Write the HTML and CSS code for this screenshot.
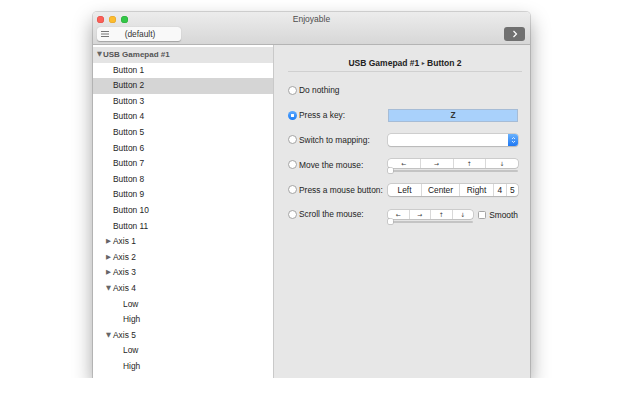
FILE: index.html
```html
<!DOCTYPE html>
<html lang="en">
<head>
  <meta charset="UTF-8">
  <title>Enjoyable</title>
  <link rel="stylesheet" href="styles.css">
</head>
<body>
  <div class="stage">
    <div class="window">

      <!-- Title bar + toolbar -->
      <div class="titlebar">
        <div class="title-row">
          <div class="lights">
            <span class="light red"></span>
            <span class="light yellow"></span>
            <span class="light green"></span>
          </div>
          <div class="title">Enjoyable</div>
        </div>
        <div class="toolbar">
          <div class="mapping-btn">
            <svg class="menu-icon" width="8" height="6" viewBox="0 0 8 6">
              <path d="M0 0.5H8M0 3H8M0 5.5H8" stroke="#666" stroke-width="0.9"/>
            </svg>
            <span class="mapping-name">(default)</span>
          </div>
          <div class="next-btn">
            <svg width="6" height="8" viewBox="0 0 6 8">
              <path d="M1.5 1L4.5 4L1.5 7" fill="none" stroke="#fff" stroke-width="1.2"/>
            </svg>
          </div>
        </div>
      </div>

      <div class="content">
        <!-- Device tree -->
        <div class="sidebar">
          <div class="row group"><span class="tri">▼</span>USB Gamepad #1</div>
          <div class="row lvl1">Button 1</div>
          <div class="row lvl1 selected">Button 2</div>
          <div class="row lvl1">Button 3</div>
          <div class="row lvl1">Button 4</div>
          <div class="row lvl1">Button 5</div>
          <div class="row lvl1">Button 6</div>
          <div class="row lvl1">Button 7</div>
          <div class="row lvl1">Button 8</div>
          <div class="row lvl1">Button 9</div>
          <div class="row lvl1">Button 10</div>
          <div class="row lvl1">Button 11</div>
          <div class="row axis"><span class="tri">▶</span>Axis 1</div>
          <div class="row axis"><span class="tri">▶</span>Axis 2</div>
          <div class="row axis"><span class="tri">▶</span>Axis 3</div>
          <div class="row axis"><span class="tri">▼</span>Axis 4</div>
          <div class="row lvl2">Low</div>
          <div class="row lvl2">High</div>
          <div class="row axis"><span class="tri">▼</span>Axis 5</div>
          <div class="row lvl2">Low</div>
          <div class="row lvl2">High</div>
        </div>

        <!-- Action panel -->
        <div class="panel">
          <div class="heading">USB Gamepad #1 <span class="crumb">▸</span> Button 2</div>

          <div class="options">
            <div class="option">
              <label class="choice"><span class="radio"></span>Do nothing</label>
            </div>

            <div class="option">
              <label class="choice"><span class="radio on"></span>Press a key:</label>
              <div class="keyfield">Z</div>
            </div>

            <div class="option">
              <label class="choice"><span class="radio"></span>Switch to mapping:</label>
              <div class="popup">
                <span class="stepper">
                  <svg width="5" height="8" viewBox="0 0 5 8">
                    <path d="M1 3L2.5 1.5L4 3M1 5L2.5 6.5L4 5" fill="none" stroke="#fff" stroke-width="0.8"/>
                  </svg>
                </span>
              </div>
            </div>

            <div class="option">
              <label class="choice"><span class="radio"></span>Move the mouse:</label>
              <div class="group-ctl">
                <div class="segmented small">
                  <span>←</span><span>→</span><span>↑</span><span>↓</span>
                </div>
                <div class="slider"><span class="knob"></span></div>
              </div>
            </div>

            <div class="option">
              <label class="choice"><span class="radio"></span>Press a mouse button:</label>
              <div class="segmented buttons">
                <span class="w-left">Left</span><span class="w-center">Center</span><span class="w-right">Right</span><span class="w-num">4</span><span class="w-num">5</span>
              </div>
            </div>

            <div class="option">
              <label class="choice"><span class="radio"></span>Scroll the mouse:</label>
              <div class="scroll-ctl">
                <div class="group-ctl narrow">
                  <div class="segmented small">
                    <span>←</span><span>→</span><span>↑</span><span>↓</span>
                  </div>
                  <div class="slider"><span class="knob"></span></div>
                </div>
                <label class="check"><span class="box"></span>Smooth</label>
              </div>
            </div>
          </div>
        </div>
      </div>

    </div>
  </div>
</body>
</html>
```

FILE: styles.css
```css
body {
  margin: 0;
  background: #fff;
  font-family: "Liberation Sans", Arial, sans-serif;
  font-size: 8.4px;
  color: #1e1e1e;
}

.stage {
  padding: 12px 0 0 93px;
}

.window {
  width: 437px;
  height: 366px;
  border-radius: 4px 4px 0 0;
  overflow: hidden;
  display: flex;
  flex-direction: column;
  box-shadow: 0 9px 20px rgba(0,0,0,0.38), 0 0 0 1px rgba(0,0,0,0.14);
}

/* title bar */
.titlebar {
  height: 32px;
  background: linear-gradient(#ececec, #d7d7d7);
  border-bottom: 1px solid #b4b4b4;
  flex-shrink: 0;
}

.title-row {
  position: relative;
  height: 15px;
}

.lights {
  display: flex;
  gap: 5px;
  padding: 4px 0 0 4px;
}

.light {
  width: 7px;
  height: 7px;
  border-radius: 50%;
}
.light.red { background: #fc5f57; box-shadow: inset 0 0 0 0.5px #de4a43; }
.light.yellow { background: #fdbc2e; box-shadow: inset 0 0 0 0.5px #de9f26; }
.light.green { background: #33c748; box-shadow: inset 0 0 0 0.5px #27aa35; }

.title {
  position: absolute;
  left: 0;
  right: 0;
  top: 2px;
  text-align: center;
  font-size: 8.5px;
  color: #4d4d4d;
}

.toolbar {
  display: flex;
  justify-content: space-between;
  padding: 0 5px 0 4px;
}

.mapping-btn {
  width: 84px;
  height: 14px;
  box-sizing: border-box;
  background: #f9f9f9;
  border-radius: 3px;
  box-shadow: 0 0.5px 1px rgba(0,0,0,0.25);
  display: flex;
  align-items: center;
  padding-left: 4px;
}

.mapping-name {
  flex: 1;
  text-align: center;
  padding-right: 10px;
  color: #333;
}

.next-btn {
  width: 21px;
  height: 14px;
  background: #707070;
  border-radius: 3px;
  display: flex;
  align-items: center;
  justify-content: center;
}

/* body */
.content {
  flex: 1;
  display: flex;
}

.sidebar {
  width: 180px;
  background: #fff;
  border-right: 1px solid #c9c9c9;
  padding-top: 2px;
}

.row {
  height: 15.6px;
  line-height: 15.6px;
  white-space: nowrap;
}

.row.group {
  background: #e4e4e4;
  color: #555;
  font-weight: bold;
  font-size: 8px;
  padding-left: 4px;
}

.row.lvl1 { padding-left: 20px; }
.row.axis { padding-left: 13px; }
.row.lvl2 { padding-left: 30px; }

.row.selected { background: #d5d5d5; }

.tri {
  display: inline-block;
  width: 7px;
  font-family: "DejaVu Sans", sans-serif;
  font-size: 6.5px;
  font-weight: normal;
  color: #666;
  vertical-align: 1px;
}

.row.group .tri { width: 6px; }

.panel {
  flex: 1;
  background: #e7e7e7;
  padding: 0 8px 0 14px;
}

.heading {
  padding: 13px 0 3px;
  line-height: 10px;
  text-align: center;
  font-weight: bold;
  font-size: 8.5px;
  color: #222;
  border-bottom: 1px solid #d0d0d0;
}

.crumb {
  font-family: "DejaVu Sans", sans-serif;
  font-size: 6px;
  font-weight: normal;
  color: #444;
  vertical-align: 1px;
}

.options {
  padding-top: 6px;
}

.option {
  height: 24.8px;
  display: grid;
  grid-template-columns: 100px 130px;
  align-items: center;
}

.choice {
  display: flex;
  align-items: center;
  gap: 2px;
  white-space: nowrap;
}

.radio {
  width: 9px;
  height: 9px;
  box-sizing: border-box;
  border-radius: 50%;
  background: #fff;
  border: 1px solid #a3a3a3;
  flex-shrink: 0;
}

.radio.on {
  border: none;
  background: radial-gradient(circle, #fff 0 1.4px, transparent 1.8px), linear-gradient(#5fabff, #1b7cf5);
}

.keyfield {
  height: 13px;
  box-sizing: border-box;
  background: #a9d1fb;
  border: 1px solid #a6bcd6;
  text-align: center;
  line-height: 11px;
  font-weight: bold;
  color: #333;
}

.popup {
  height: 12px;
  box-sizing: border-box;
  background: #fff;
  border-radius: 3px;
  box-shadow: 0 0 0 0.5px #b9b9b9, 0 0.5px 1px rgba(0,0,0,0.2);
  display: flex;
  justify-content: flex-end;
}

.stepper {
  width: 10px;
  border-radius: 0 3px 3px 0;
  background: linear-gradient(#68b1fd, #1e78f3);
  display: flex;
  align-items: center;
  justify-content: center;
}

.group-ctl {
  display: flex;
  flex-direction: column;
  gap: 2px;
  padding-top: 2px;
}

.segmented {
  display: flex;
  background: #fff;
  border-radius: 3px;
  box-shadow: 0 0 0 0.5px #b3b3b3, 0 0.5px 1px rgba(0,0,0,0.2);
}

.segmented span {
  flex: 1;
  text-align: center;
  border-left: 1px solid #d9d9d9;
}

.segmented span:first-child { border-left: none; }

.segmented.small {
  height: 9px;
  line-height: 9px;
  font-family: "DejaVu Sans", sans-serif;
  font-size: 6px;
  color: #444;
}

.segmented.buttons {
  height: 12px;
  line-height: 12px;
  color: #222;
}

.segmented.buttons .w-left { flex: 0 0 33px; }
.segmented.buttons .w-center { flex: 0 0 37px; }
.segmented.buttons .w-right { flex: 0 0 33px; }
.segmented.buttons .w-num { flex: 1; }

.slider {
  position: relative;
  height: 2px;
  background: #c4c4c4;
  border-radius: 1px;
}

.knob {
  position: absolute;
  left: 0;
  top: -2px;
  width: 5px;
  height: 5px;
  border-radius: 1px;
  background: #fff;
  box-shadow: 0 0 0 0.5px #aaa;
}

.scroll-ctl {
  display: flex;
  align-items: center;
  gap: 5px;
  margin-top: 2px;
}

.group-ctl.narrow { width: 86px; }

.check {
  display: flex;
  align-items: center;
  gap: 3px;
  color: #222;
}

.box {
  width: 8px;
  height: 8px;
  box-sizing: border-box;
  background: #fff;
  border: 1px solid #a5a5a5;
  border-radius: 1.5px;
}
```
